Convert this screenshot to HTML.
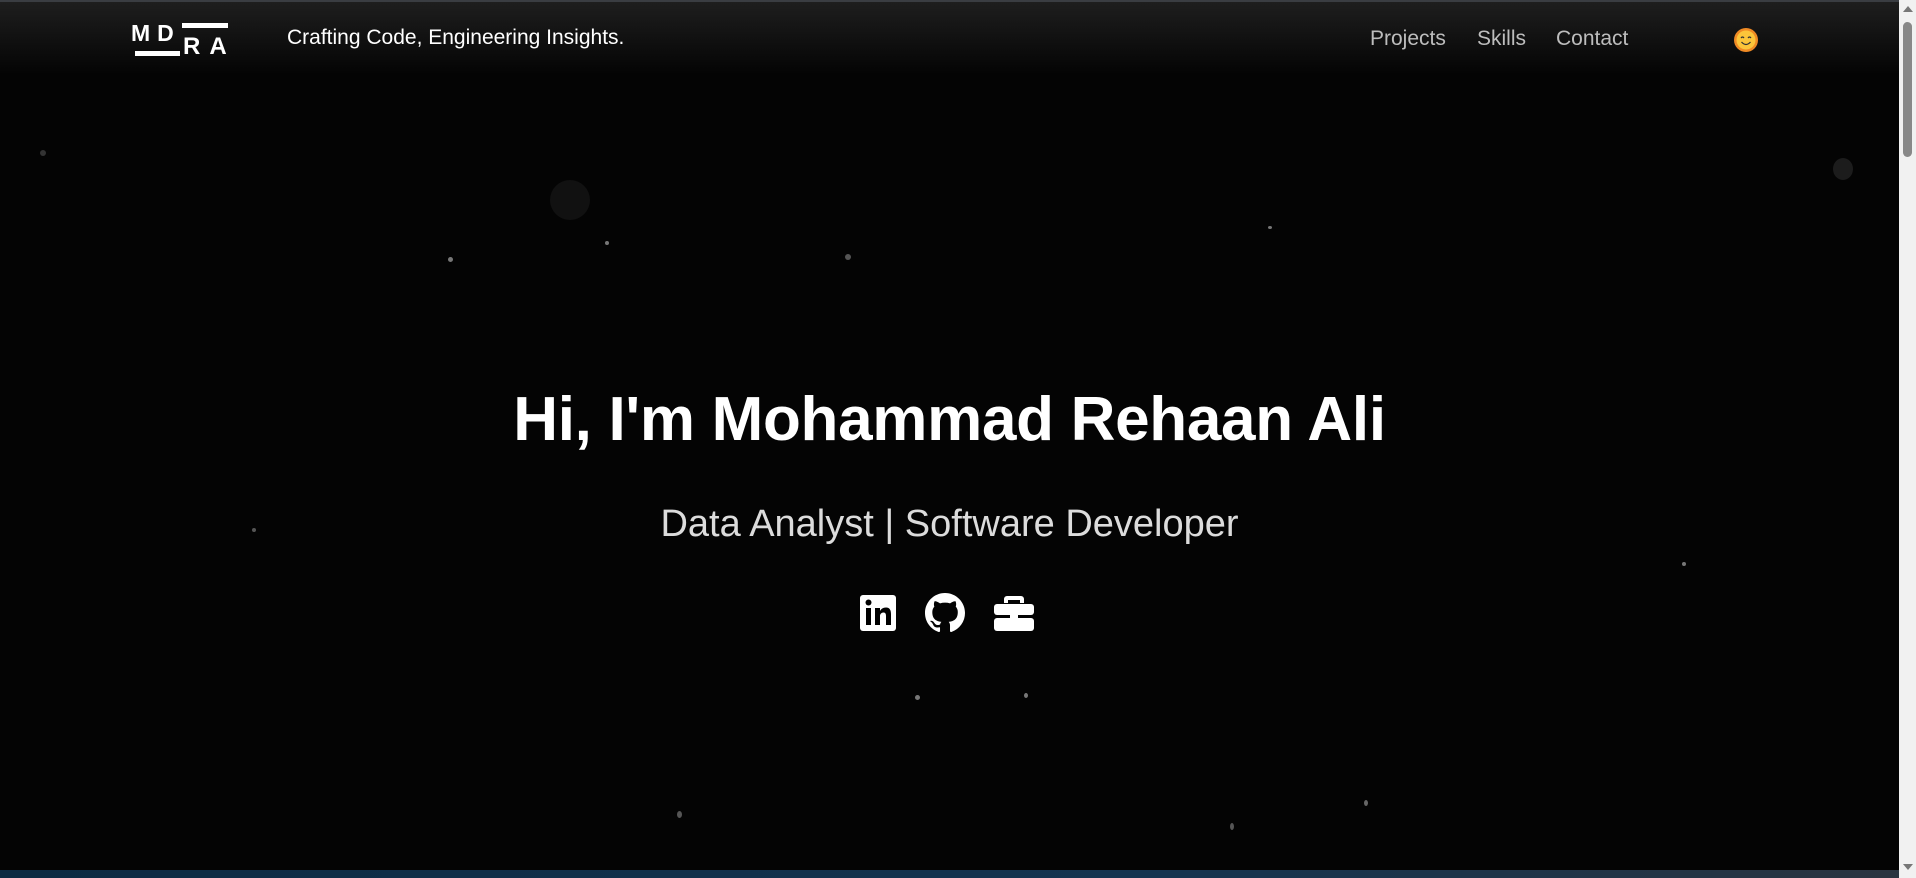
<!DOCTYPE html>
<html><head><meta charset="utf-8"><style>
html,body{margin:0;padding:0;width:1916px;height:878px;overflow:hidden;background:#050505;font-family:"Liberation Sans",sans-serif}
.page{position:absolute;left:0;top:0;width:1899px;height:878px;background:#040404;overflow:hidden}
.hdr{position:absolute;left:0;top:0;width:1899px;height:75px;background:linear-gradient(#1e1e1e 0,#151515 35%,#040404 100%);border-top:2px solid #3a3d42;box-sizing:border-box}
.logo{position:absolute;left:131px;top:20px;width:100px;height:40px;color:#fff;font-weight:bold;font-size:23px}
.tag{position:absolute;left:287px;top:26px;color:#fff;font-size:21px}
.nav{position:absolute;top:27px;color:#bdbdbd;font-size:21px}
h1{position:absolute;left:0;width:1899px;top:384px;margin:0;text-align:center;color:#fff;font-size:62px;font-weight:bold;letter-spacing:-0.3px}
.sub{position:absolute;left:0;width:1899px;top:503px;text-align:center;color:#dcdcdc;font-size:38px}
.bot{position:absolute;left:0;top:870px;width:1899px;height:8px;background:linear-gradient(90deg,#0c2a42,#143450 60%,#2a3440)}
.sb{position:absolute;left:1899px;top:0;width:17px;height:878px;background:#f1f1f1}
.star{position:absolute;border-radius:50%;background:#777}
</style></head><body>
<div class="page">
<div class="star" style="left:448px;top:257px;width:5px;height:5px"></div>
<div class="star" style="left:845px;top:254px;width:6px;height:6px;background:#555"></div>
<div class="star" style="left:605px;top:241px;width:4px;height:4px"></div>
<div class="star" style="left:1268px;top:226px;width:4px;height:3px"></div>
<div class="star" style="left:1682px;top:562px;width:4px;height:4px"></div>
<div class="star" style="left:915px;top:695px;width:5px;height:5px"></div>
<div class="star" style="left:1024px;top:693px;width:4px;height:5px"></div>
<div class="star" style="left:252px;top:528px;width:4px;height:4px;background:#555"></div>
<div class="star" style="left:40px;top:150px;width:6px;height:6px;background:#333"></div>
<div class="star" style="left:1833px;top:158px;width:20px;height:22px;background:#1c1c1c"></div>
<div class="star" style="left:550px;top:180px;width:40px;height:40px;background:#111"></div>
<div class="star" style="left:677px;top:811px;width:5px;height:7px;background:#555"></div>
<div class="star" style="left:1364px;top:800px;width:4px;height:6px;background:#666"></div>
<div class="star" style="left:1230px;top:823px;width:4px;height:7px;background:#555"></div>
<div class="hdr"></div>
<div class="logo">
<span style="position:absolute;left:0;top:0;letter-spacing:7px">MD</span>
<div style="position:absolute;left:4px;top:31px;width:45px;height:5px;background:#fff"></div>
<div style="position:absolute;left:51px;top:3px;width:46px;height:5px;background:#fff"></div>
<span style="position:absolute;left:52px;top:13px;letter-spacing:9px;font-size:24px">RA</span>
</div>
<div class="tag">Crafting Code, Engineering Insights.</div>
<div class="nav" style="left:1370px">Projects</div>
<div class="nav" style="left:1477px">Skills</div>
<div class="nav" style="left:1556px">Contact</div>
<svg style="position:absolute;left:1733px;top:27px" width="26" height="26" viewBox="0 0 26 26"><circle cx="13" cy="13" r="12" fill="#f08a24"/><circle cx="13" cy="13" r="9.5" fill="#fcc53a"/><path d="M8 11q1.5-2 3 0M15 11q1.5-2 3 0" stroke="#333" stroke-width="1.2" fill="none"/><path d="M8.5 15q4.5 5 9 0" stroke="#333" stroke-width="1.3" fill="none"/></svg>
<h1>Hi, I'm Mohammad Rehaan Ali</h1>
<div class="sub">Data Analyst | Software Developer</div>
<svg style="position:absolute;left:859px;top:594px" width="38" height="38" viewBox="0 0 38 38"><rect x="1" y="1" width="36" height="36" rx="3" fill="#fff"/><rect x="7" y="14" width="5" height="17" fill="#000"/><circle cx="9.5" cy="8.5" r="3" fill="#000"/><path d="M16 14h5v3c1-2 3-3.5 6-3.5 4 0 5 3 5 7V31h-5v-9c0-2-.5-3.5-2.5-3.5S21 20 21 22v9h-5z" fill="#000"/></svg>
<svg style="position:absolute;left:925px;top:593px" width="40" height="40" viewBox="0 0 16 16"><path fill="#fff" d="M8 0C3.58 0 0 3.58 0 8c0 3.54 2.29 6.53 5.47 7.59.4.07.55-.17.55-.38 0-.19-.01-.82-.01-1.49-2.01.37-2.53-.49-2.69-.94-.09-.23-.48-.94-.82-1.13-.28-.15-.68-.52-.01-.53.63-.01 1.08.58 1.23.82.72 1.21 1.87.87 2.33.66.07-.52.28-.87.51-1.07-1.78-.2-3.64-.89-3.64-3.95 0-.87.31-1.59.82-2.15-.08-.2-.36-1.02.08-2.12 0 0 .67-.21 2.2.82.64-.18 1.32-.27 2-.27.68 0 1.36.09 2 .27 1.53-1.04 2.2-.82 2.2-.82.44 1.1.16 1.92.08 2.12.51.56.82 1.27.82 2.15 0 3.07-1.87 3.75-3.65 3.95.29.25.54.73.54 1.48 0 1.07-.01 1.93-.01 2.2 0 .21.15.46.55.38A8.013 8.013 0 0016 8c0-4.42-3.58-8-8-8z"/></svg>
<svg style="position:absolute;left:993px;top:594px" width="42" height="38" viewBox="0 0 42 38"><path fill="#fff" d="M14 2h14a3 3 0 013 3v4h-4V6H15v3h-4V5a3 3 0 013-3z"/><rect x="1" y="10" width="40" height="11" rx="3" fill="#fff"/><rect x="1" y="24" width="40" height="13" rx="3" fill="#fff"/><rect x="17" y="20" width="8" height="6" fill="#fff"/></svg>
<div class="bot"></div>
</div>
<div class="sb"><div style="position:absolute;left:4px;top:22px;width:9px;height:135px;border-radius:5px;background:#888"></div>
<div style="position:absolute;left:4px;top:6px;width:0;height:0;border-left:5px solid transparent;border-right:5px solid transparent;border-bottom:6px solid #777"></div>
<div style="position:absolute;left:4px;top:864px;width:0;height:0;border-left:5px solid transparent;border-right:5px solid transparent;border-top:6px solid #777"></div></div>
</body></html>
